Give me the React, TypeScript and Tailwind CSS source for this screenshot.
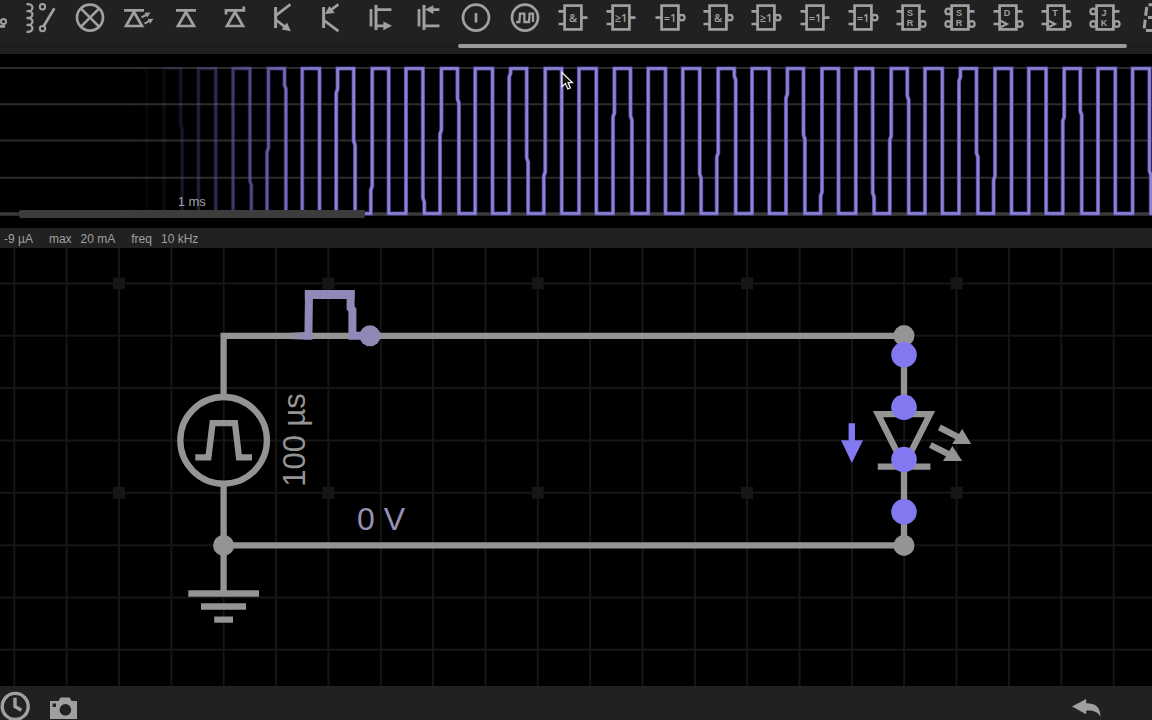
import type { ReactNode } from "react";

const SANS = "font-['Liberation_Sans',Arial,sans-serif]";

// ---------- toolbar icons (48x36 box) ----------

function Icon({ children }: { children: ReactNode }) {
  return (
    <svg
      viewBox="0 0 48 36"
      className="w-12 h-9 shrink-0 overflow-visible"
      fill="none"
      stroke="currentColor"
      strokeWidth={2.7}
      aria-hidden="true"
    >
      {children}
    </svg>
  );
}

function Label({ y, size, children }: { y: number; size: "sm" | "md"; children: ReactNode }) {
  return (
    <text
      x={size === "sm" ? 23 : 24}
      y={y}
      textAnchor="middle"
      fill="currentColor"
      stroke="none"
      className={
        size === "sm"
          ? "text-[9px] font-bold font-['Liberation_Sans',Arial,sans-serif]"
          : "text-[11px] font-semibold font-['Open_Sans',sans-serif]"
      }
    >
      {children}
    </text>
  );
}

function Box() {
  return <rect x={15.6} y={5.6} width={16.8} height={23.8} />;
}

function Gate({ label, single, inverted }: { label: string; single?: boolean; inverted?: boolean }) {
  return (
    <Icon>
      <Box />
      <path d={single ? "M9.5 17.6H15" : "M9.5 11.4H15M9.5 24H15"} />
      {inverted ? <circle cx={35.8} cy={17.6} r={2.8} strokeWidth={2.2} /> : <path d="M33 17.6H38.5" />}
      <Label y={22} size="md">
        {label}
      </Label>
    </Icon>
  );
}

function FlipFlop({ top, bottom, ring }: { top: string; bottom?: string; ring?: boolean }) {
  return (
    <Icon>
      <Box />
      {ring ? (
        <g strokeWidth={2.2}>
          <circle cx={12.2} cy={11.4} r={2.8} />
          <circle cx={12.2} cy={24} r={2.8} />
        </g>
      ) : (
        <path d="M9.5 11.4H15M9.5 24H15" />
      )}
      <path d="M33 11.4H38.5" />
      <circle cx={35.8} cy={24} r={2.8} strokeWidth={2.2} />
      <Label y={16} size="sm">
        {top}
      </Label>
      {bottom ? (
        <Label y={26} size="sm">
          {bottom}
        </Label>
      ) : (
        <path d="M16 20.5L23 24L16 27.5" strokeWidth={2} />
      )}
    </Icon>
  );
}

const DIODE = "M24 12L16 26H32Z";

const TOOLS: { name: string; icon: ReactNode }[] = [
  {
    name: "Switch",
    icon: (
      <Icon>
        <circle cx={34.5} cy={21.5} r={2.6} strokeWidth={2} />
        <path d="M20 26.4H36" />
      </Icon>
    ),
  },
  {
    name: "Relay",
    icon: (
      <Icon>
        <path
          d="M9.5 4.2H11a4.4 3.4 0 0 1 0 6.9a4.4 3.4 0 0 1 0 6.9a4.4 3.4 0 0 1 0 6.9a4.4 3.4 0 0 1 0 6.9H9.5M9.5 11.1H12M9.5 18H12M9.5 24.9H12"
          strokeWidth={2.3}
        />
        <circle cx={25.5} cy={6.8} r={2.7} strokeWidth={2} />
        <circle cx={25.5} cy={28.6} r={2.7} strokeWidth={2} />
        <path d="M26.6 26.2L37.4 8.2" />
      </Icon>
    ),
  },
  {
    name: "Lamp",
    icon: (
      <Icon>
        <circle cx={24} cy={17.6} r={13} />
        <path d="M15 8.6L33 26.6M33 8.6L15 26.6" />
      </Icon>
    ),
  },
  {
    name: "LED",
    icon: (
      <Icon>
        <path d="M10 10.4H30M20 12L12 26H28Z" />
        <path d="M27.5 17.4L32 15M30.5 23.6L35 21.2" strokeWidth={2} />
        <path d="M36.5 12.6L30.5 12.8L33.2 17.6ZM39.5 18.8L33.5 19L36.2 23.8Z" fill="currentColor" stroke="none" />
      </Icon>
    ),
  },
  {
    name: "Diode",
    icon: (
      <Icon>
        <path d={`M14 10.4H34${DIODE}`} />
      </Icon>
    ),
  },
  {
    name: "Zener diode",
    icon: (
      <Icon>
        <path d={`M15 14.5V10.4H32.8V6.4${DIODE}`} />
      </Icon>
    ),
  },
  {
    name: "NPN transistor",
    icon: (
      <Icon>
        <path d="M16.6 7V28" strokeWidth={3} />
        <path d="M17 15.4L31.4 4.4M17 20L27 27.6" />
        <path d="M31.8 31.2L22.6 29.6L28 22.4Z" fill="currentColor" stroke="none" />
      </Icon>
    ),
  },
  {
    name: "PNP transistor",
    icon: (
      <Icon>
        <path d="M16.6 7V28" strokeWidth={3} />
        <path d="M24 9.8L31.4 4.4M17 20.4L31.4 31.2" />
        <path d="M18 14L22.4 6L27.6 13Z" fill="currentColor" stroke="none" />
      </Icon>
    ),
  },
  {
    name: "N-channel MOSFET",
    icon: (
      <Icon>
        <path d="M15 9V26.4M20 9.6H35.4M20 25.8H29" />
        <path d="M20 5V30" strokeWidth={3} />
        <path d="M36 25.8L27.4 21.4V30.2Z" fill="currentColor" stroke="none" />
      </Icon>
    ),
  },
  {
    name: "P-channel MOSFET",
    icon: (
      <Icon>
        <path d="M15 9V26.4M28 9.6H35.4M20 25.8H35.4" />
        <path d="M20 5V30" strokeWidth={3} />
        <path d="M21 9.6L29.4 5.2V14Z" fill="currentColor" stroke="none" />
      </Icon>
    ),
  },
  {
    name: "Voltage source",
    icon: (
      <Icon>
        <circle cx={24} cy={17.6} r={13} />
        <path d="M24 13V22.6" />
      </Icon>
    ),
  },
  {
    name: "Square wave source",
    icon: (
      <Icon>
        <circle cx={24} cy={17.6} r={13} />
        <path d="M15 22H18.4L19 13.6H23.4V22H28L28.6 13.6H32V22" strokeWidth={2.3} />
      </Icon>
    ),
  },
  { name: "AND gate", icon: <Gate label="&" /> },
  { name: "OR gate", icon: <Gate label="≥1" /> },
  { name: "NOT gate", icon: <Gate label="=1" single inverted /> },
  { name: "NAND gate", icon: <Gate label="&" inverted /> },
  { name: "NOR gate", icon: <Gate label="≥1" inverted /> },
  { name: "XOR gate", icon: <Gate label="=1" /> },
  { name: "XNOR gate", icon: <Gate label="=1" inverted /> },
  { name: "SR latch", icon: <FlipFlop top="S" bottom="R" /> },
  { name: "Inverted SR latch", icon: <FlipFlop top="S" bottom="R" ring /> },
  { name: "D flip-flop", icon: <FlipFlop top="D" /> },
  { name: "T flip-flop", icon: <FlipFlop top="T" /> },
  { name: "JK flip-flop", icon: <FlipFlop top="J" bottom="K" ring /> },
  {
    name: "7-segment display",
    icon: (
      <Icon>
        <path
          d="M19.6 4.8H29M17.8 7L16.6 15.8M19 17.6H27M16.2 19.6L15.2 28.4M17 30.6H26M31 7L29.8 15.8M29.4 19.6L28.4 28.4"
          strokeWidth={3}
        />
      </Icon>
    ),
  },
];

function Toolbar() {
  return (
    <header className="h-[54px] shrink-0 overflow-hidden bg-[#212121] text-[#a0a0a0]">
      <div className="-ml-[31px] -mr-[25px] grid h-11 items-start grid-cols-[repeat(25,minmax(0,1fr))]">
        {TOOLS.map((tool) => (
          <button key={tool.name} type="button" aria-label={tool.name} className="flex justify-center">
            {tool.icon}
          </button>
        ))}
      </div>
      <div className="flex items-center h-1 bg-[#1d1d1d]">
        <div className="ml-[39.8%] w-[58%] h-1 rounded-full bg-[#9c9c9c]" />
      </div>
    </header>
  );
}

// ---------- oscilloscope ----------

const PERIOD = 34.6;
const TOP = 68.5;
const BOTTOM = 213.5;

// heights at which the sampled edge steps over to the next column
const RISE_STEPS: Record<number, number> = {
  [-4]: 150, [-2]: 91, [-1]: 188, 1: 132, 3: 75, 4: 174, 6: 115, 9: 155,
  11: 96, 12: 194, 14: 138, 16: 79, 17: 178, 19: 119,
};
const FALL_STEPS: Record<number, number> = {
  [-7]: 127, [-5]: 183, [-4]: 87, [-2]: 143, 0: 200, 1: 101, 3: 160, 6: 118,
  8: 176, 9: 78, 11: 137, 13: 195, 14: 98, 16: 155, 19: 113, 21: 173,
};

function wavePath() {
  let d = `M100 ${BOTTOM}`;
  for (let k = -8; k <= 21; k++) {
    const rise = 406 + k * PERIOD;
    const fall = rise + PERIOD / 2;
    const riseStep = RISE_STEPS[k];
    const fallStep = FALL_STEPS[k];
    d += riseStep
      ? `H${rise - 0.6}V${riseStep + 2}L${rise + 0.8} ${riseStep - 2}V${TOP}`
      : `H${rise}V${TOP}`;
    d += fallStep
      ? `H${fall - 0.4}V${fallStep - 2}L${fall + 1} ${fallStep + 2}V${BOTTOM}`
      : `H${fall}V${BOTTOM}`;
  }
  return `${d}H1180`;
}

const WAVE = wavePath();

function FadeStops({ color }: { color: string }) {
  return (
    <>
      <stop offset="0" stopColor={color} stopOpacity={0} />
      <stop offset="0.2" stopColor={color} stopOpacity={0.06} />
      <stop offset="0.4" stopColor={color} stopOpacity={0.2} />
      <stop offset="0.6" stopColor={color} stopOpacity={0.42} />
      <stop offset="0.8" stopColor={color} stopOpacity={0.76} />
      <stop offset="1" stopColor={color} />
    </>
  );
}

function Scope() {
  return (
    <section className="relative h-[174px] shrink-0 overflow-hidden bg-black">
      <svg viewBox="0 54 1152 174" preserveAspectRatio="none" className="block w-full h-full" fill="none">
        <defs>
          <linearGradient id="fadeEdge" gradientUnits="userSpaceOnUse" x1="125" y1="0" x2="335" y2="0">
            <FadeStops color="#4c42a4" />
          </linearGradient>
          <linearGradient id="fadeCore" gradientUnits="userSpaceOnUse" x1="125" y1="0" x2="335" y2="0">
            <FadeStops color="#8d84d0" />
          </linearGradient>
        </defs>
        <path d="M0 68H1152M0 104.3H1152M0 140.5H1152M0 177.8H1152" stroke="#2c2c2c" strokeWidth={2} />
        <path d="M0 214H1152" stroke="#3a3a3a" strokeWidth={3.4} />
        <path d={WAVE} stroke="url(#fadeEdge)" strokeWidth={4.2} />
        <path d={WAVE} stroke="url(#fadeCore)" strokeWidth={2.6} />
      </svg>
      <div className="absolute bottom-[10px] left-[19px] w-[30%] flex flex-col items-center">
        <span className={`text-[13px] leading-4 text-[#a0a0a0] ${SANS}`}>1 ms</span>
        <div className="h-2 w-full rounded-xs bg-[#3c3c3c]" />
      </div>
      <svg viewBox="0 0 14 20" className="absolute left-[561px] top-[17px] w-[14px] h-5" aria-hidden="true">
        <path
          d="M1 1.5V15.5L4.4 12.6L6.8 18L9.4 16.9L7.1 11.6H11.4Z"
          fill="#111"
          stroke="#eee"
          strokeWidth={1.3}
        />
      </svg>
    </section>
  );
}

function Readout() {
  return (
    <div
      className={`h-5 shrink-0 flex items-end gap-4 pl-1 bg-[#212121] text-xs leading-[18px] text-[#a0a0a0] ${SANS}`}
    >
      <span>-9 µA</span>
      <dl className="flex gap-[9px]">
        <dt>max</dt>
        <dd>20 mA</dd>
      </dl>
      <dl className="flex gap-[9px]">
        <dt>freq</dt>
        <dd>10 kHz</dd>
      </dl>
    </div>
  );
}

// ---------- circuit ----------

const CELL = 52.35;
const COLS = Array.from({ length: 22 }, (_, i) => 14.3 + i * CELL);
const ROWS = Array.from({ length: 8 }, (_, i) => 283.4 + i * CELL);
const MARKS = [2, 6, 10, 14, 18].flatMap((c) => [0, 4].map((r) => ({ x: COLS[c], y: ROWS[r] })));

function Circuit() {
  return (
    <main className="flex-1 min-h-0 bg-black">
      <svg
        viewBox="0 248 1152 438"
        preserveAspectRatio="xMidYMid slice"
        className="block w-full h-full"
        fill="none"
        strokeWidth={6.3}
      >
        <defs>
          <linearGradient id="tail" gradientUnits="userSpaceOnUse" x1="288" y1="0" x2="305" y2="0">
            <stop offset="0" stopColor="#9188b8" stopOpacity={0} />
            <stop offset="1" stopColor="#9188b8" />
          </linearGradient>
        </defs>

        <g stroke="#161616" strokeWidth={2}>
          {COLS.map((x) => (
            <path key={x} d={`M${x} 248V686`} />
          ))}
          {ROWS.map((y) => (
            <path key={y} d={`M0 ${y}H1152`} />
          ))}
        </g>
        {MARKS.map((m) => (
          <rect key={`${m.x}-${m.y}`} x={m.x - 6} y={m.y - 6} width={12} height={12} fill="#161616" />
        ))}

        {/* wires */}
        <g stroke="#949494">
          <path d="M223.6 397V335.8H904V412M904 466V545.4H223.6M223.6 484V593" />
          <circle cx={223.6} cy={440.3} r={43.3} />
          <path d="M195.3 457.4H208.4L212.6 423.2H235L239 457.4H252" />
          <path d="M188.3 593.5H259M201 606.5H246M214.2 619.6H233" />
          <path d="M878 414.2H930L904 466Z" />
          <path d="M877.8 466.7H930.4" />
          <path d="M939.4 427.4L958 437M930.4 445L949 454.4" />
        </g>
        <g fill="#949494">
          <circle cx={223.6} cy={545.4} r={10.5} />
          <circle cx={904} cy={335.6} r={10.5} />
          <circle cx={904} cy={545.4} r={10.5} />
          <path d="M971.2 444H952.2L962.2 429ZM962.2 461H943L952.4 446Z" />
        </g>

        {/* voltage pulse */}
        <rect x={288} y={332} width={17} height={7.6} fill="url(#tail)" />
        <path d="M304.6 335.8H308.4L309 294H350.6V308L352.4 310V335.8H362" stroke="#9188b8" strokeWidth={8} />
        <path d="M304.8 294.4H354.6" stroke="#9188b8" strokeWidth={9} />
        <circle cx={370} cy={335.8} r={10.5} fill="#9188b8" />

        {/* current */}
        <g fill="#8279f0">
          {[354.8, 407.2, 459.5, 511.8].map((y) => (
            <circle key={y} cx={904} cy={y} r={12.8} />
          ))}
          <path d="M848.6 423.2H855V440.2H863L851.8 463L841 440.2H848.6Z" />
        </g>

        <g className={SANS} textAnchor="middle">
          <text transform="translate(305 440) rotate(-90)" fill="#949494" className="text-[31px]">
            100 µs
          </text>
          <text x={381} y={530} fill="#9690b4" className="text-[32px]">
            0 V
          </text>
        </g>
      </svg>
    </main>
  );
}

function BottomBar() {
  return (
    <footer className="h-[34px] shrink-0 overflow-hidden flex justify-between bg-[#212121] text-[#a0a0a0]">
      <div className="-ml-[9px] flex">
        <button type="button" aria-label="Time settings">
          <svg viewBox="0 0 48 34" className="w-12 h-[34px]" fill="none" stroke="currentColor" aria-hidden="true">
            <circle cx={24.2} cy={20.4} r={13} strokeWidth={3.4} />
            <path d="M24 11.8V20.6L30.4 24.2" strokeWidth={3.4} />
          </svg>
        </button>
        <button type="button" aria-label="Take snapshot">
          <svg viewBox="0 0 48 34" className="w-12 h-[34px]" fill="currentColor" aria-hidden="true">
            <path
              fillRule="evenodd"
              d="M11 15H19.6L21.6 11.6H30.6L32.6 15H38V33H11ZM26.4 18A5.8 5.8 0 1 0 26.4 29.6A5.8 5.8 0 1 0 26.4 18ZM13.6 17.6V21H17V17.6Z"
            />
          </svg>
        </button>
      </div>
      <button type="button" aria-label="Undo" className="mr-[42px]">
        <svg viewBox="0 0 48 34" className="w-12 h-[34px]" fill="currentColor" aria-hidden="true">
          <path d="M10 20.4L24.2 13V17.2C33 17.2 38.6 20.6 38.4 30.8C36 26 31.6 24.4 24.2 24.6V28.2Z" />
        </svg>
      </button>
    </footer>
  );
}

export default function App() {
  return (
    <div className="h-screen flex flex-col overflow-hidden bg-black">
      <Toolbar />
      <Scope />
      <Readout />
      <Circuit />
      <BottomBar />
    </div>
  );
}
